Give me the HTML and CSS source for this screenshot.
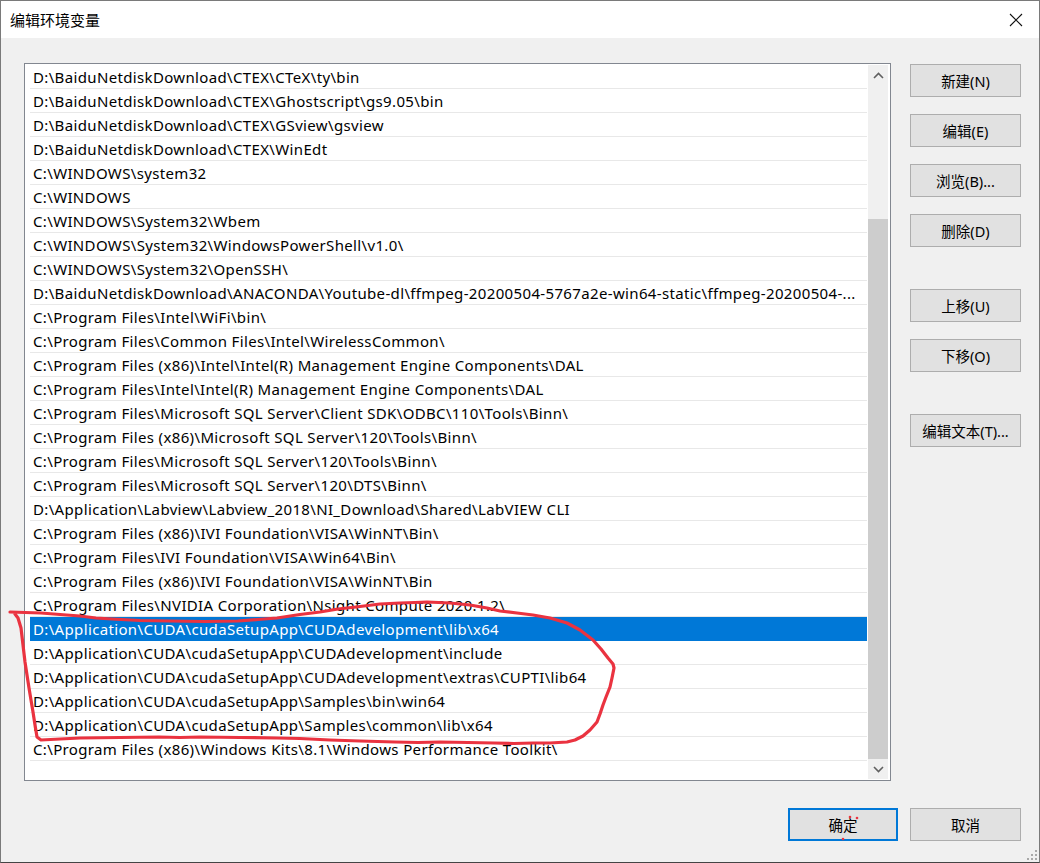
FILE: index.html
```html
<!DOCTYPE html>
<html lang="zh-CN">
<head>
<meta charset="utf-8">
<title>编辑环境变量</title>
<link rel="stylesheet" href="styles.css">
</head>
<body>
<div class="window">
  <div class="titlebar">
    <span class="title">编辑环境变量</span>
    <svg class="close" width="14" height="14" viewBox="0 0 14 14"><path d="M1 1 L13 13 M13 1 L1 13" stroke="#111" stroke-width="1.1" fill="none"/></svg>
  </div>
  <div class="body">
    <div class="main">
      <div class="listbox">
        <div class="rows">
          <div class="row">D:\BaiduNetdiskDownload\CTEX\CTeX\ty\bin</div>
          <div class="row">D:\BaiduNetdiskDownload\CTEX\Ghostscript\gs9.05\bin</div>
          <div class="row">D:\BaiduNetdiskDownload\CTEX\GSview\gsview</div>
          <div class="row">D:\BaiduNetdiskDownload\CTEX\WinEdt</div>
          <div class="row">C:\WINDOWS\system32</div>
          <div class="row">C:\WINDOWS</div>
          <div class="row">C:\WINDOWS\System32\Wbem</div>
          <div class="row">C:\WINDOWS\System32\WindowsPowerShell\v1.0\</div>
          <div class="row">C:\WINDOWS\System32\OpenSSH\</div>
          <div class="row">D:\BaiduNetdiskDownload\ANACONDA\Youtube-dl\ffmpeg-20200504-5767a2e-win64-static\ffmpeg-20200504-...</div>
          <div class="row">C:\Program Files\Intel\WiFi\bin\</div>
          <div class="row">C:\Program Files\Common Files\Intel\WirelessCommon\</div>
          <div class="row">C:\Program Files (x86)\Intel\Intel(R) Management Engine Components\DAL</div>
          <div class="row">C:\Program Files\Intel\Intel(R) Management Engine Components\DAL</div>
          <div class="row">C:\Program Files\Microsoft SQL Server\Client SDK\ODBC\110\Tools\Binn\</div>
          <div class="row">C:\Program Files (x86)\Microsoft SQL Server\120\Tools\Binn\</div>
          <div class="row">C:\Program Files\Microsoft SQL Server\120\Tools\Binn\</div>
          <div class="row">C:\Program Files\Microsoft SQL Server\120\DTS\Binn\</div>
          <div class="row">D:\Application\Labview\Labview_2018\NI_Download\Shared\LabVIEW CLI</div>
          <div class="row">C:\Program Files (x86)\IVI Foundation\VISA\WinNT\Bin\</div>
          <div class="row">C:\Program Files\IVI Foundation\VISA\Win64\Bin\</div>
          <div class="row">C:\Program Files (x86)\IVI Foundation\VISA\WinNT\Bin</div>
          <div class="row">C:\Program Files\NVIDIA Corporation\Nsight Compute 2020.1.2\</div>
          <div class="row selected">D:\Application\CUDA\cudaSetupApp\CUDAdevelopment\lib\x64</div>
          <div class="row">D:\Application\CUDA\cudaSetupApp\CUDAdevelopment\include</div>
          <div class="row">D:\Application\CUDA\cudaSetupApp\CUDAdevelopment\extras\CUPTI\lib64</div>
          <div class="row">D:\Application\CUDA\cudaSetupApp\Samples\bin\win64</div>
          <div class="row">D:\Application\CUDA\cudaSetupApp\Samples\common\lib\x64</div>
          <div class="row">C:\Program Files (x86)\Windows Kits\8.1\Windows Performance Toolkit\</div>
        </div>
        <div class="scrollbar">
          <div class="arrow">
            <svg width="11" height="7" viewBox="0 0 11 7"><path d="M1 6 L5.5 1.5 L10 6" stroke="#606060" stroke-width="1.6" fill="none"/></svg>
          </div>
          <div class="track"><div class="thumb"></div></div>
          <div class="arrow">
            <svg width="11" height="7" viewBox="0 0 11 7"><path d="M1 1 L5.5 5.5 L10 1" stroke="#606060" stroke-width="1.6" fill="none"/></svg>
          </div>
        </div>
      </div>
      <div class="side">
        <div class="group">
          <button class="btn">新建(N)</button>
          <button class="btn">编辑(E)</button>
          <button class="btn">浏览(B)...</button>
          <button class="btn">删除(D)</button>
        </div>
        <div class="group">
          <button class="btn">上移(U)</button>
          <button class="btn">下移(O)</button>
        </div>
        <div class="group">
          <button class="btn">编辑文本(T)...</button>
        </div>
      </div>
    </div>
    <div class="footer">
      <button class="btn default">确定</button>
      <button class="btn">取消</button>
    </div>
  </div>
  <svg class="grip" width="14" height="12" viewBox="0 0 14 12">
    <rect x="11" y="0" width="2" height="2" fill="#a8a8a8"/>
    <rect x="7" y="4" width="2" height="2" fill="#a8a8a8"/>
    <rect x="11" y="4" width="2" height="2" fill="#a8a8a8"/>
    <rect x="3" y="8" width="2" height="2" fill="#a8a8a8"/>
    <rect x="7" y="8" width="2" height="2" fill="#a8a8a8"/>
    <rect x="11" y="8" width="2" height="2" fill="#a8a8a8"/>
  </svg>
  <svg class="annotation" width="1040" height="863" viewBox="0 0 1040 863">
    <path d="M10,612 L25,612.5 L41,613 L60,614.5 L80,616 L96,618 L112,619 L140,620.5 L170,621 L205,621.5 L238,621 L258,619.5 L277,618 L300,614.5 L320,612 L338,609 L356,607 L380,604 L400,603 L415,602.5 L427,602 L450,603 L470,605 L487,608 L500,611 L517,613 L533,615 L550,618 L567,623 L580,630 L593,640 L601,649 L608,658 L613,664 L614,668 L612,678 L610,687 L606,697 L603,705 L600,714 L597,722 L590,730 L583,736 L575,740 L567,742 L550,743 L533,743 L514,743.5 L494,743 L468,742.5 L440,742 L418,742.5 L395,742 L360,741 L330,740 L300,738.5 L277,738 L240,737.5 L200,737 L180,737.5 L159,737 L120,737.5 L80,738 L60,739 L41,740 L37,737 L35,725 L33,712 L31,700 L29,688 L27,675 L25,662 L23,645 L21,628 L18,618 L15,614" stroke="#ea3340" stroke-width="3.2" fill="none" stroke-linejoin="round" stroke-linecap="round"/>
    <circle cx="850" cy="817" r="1.3" fill="#ea3340"/>
    <circle cx="857" cy="818" r="1.3" fill="#ea3340"/>
    <circle cx="843" cy="839" r="1.3" fill="#ea3340"/>
  </svg>
</div>
</body>
</html>
```
FILE: styles.css
```css
* { box-sizing: border-box; }
html, body { margin: 0; padding: 0; background: #f0f0f0; }
body { font-family: "Noto Sans", "Noto Sans CJK SC", sans-serif; }

.window {
  position: relative;
  width: 1040px;
  height: 863px;
  border: 1px solid #7a7a7a;
  border-bottom-color: #444;
  background: #f0f0f0;
  display: flex;
  flex-direction: column;
  overflow: hidden;
}

.titlebar {
  height: 37px;
  background: #ffffff;
  display: flex;
  align-items: center;
  justify-content: space-between;
  padding: 0 16px 0 9px;
  flex: none;
}
.title {
  font-family: "Noto Sans CJK SC", sans-serif;
  font-size: 15px;
  color: #000;
}
.close { display: block; }

.body {
  flex: 1;
  display: flex;
  flex-direction: column;
  padding: 25px 18px 0 23px;
}

.main {
  display: flex;
  gap: 19px;
}

.listbox {
  width: 867px;
  height: 718px;
  border: 1px solid #828790;
  background: #ffffff;
  display: flex;
  padding: 1px 1px 1px 5px;
}

.rows {
  flex: 1;
  min-width: 0;
  display: flex;
  flex-direction: column;
}

.row {
  height: 24px;
  line-height: 24px;
  border-bottom: 1px solid #e8e8e8;
  padding-left: 3px;
  font-size: 15px;
  letter-spacing: 0.35px;
  color: #000;
  white-space: nowrap;
  overflow: hidden;
  text-overflow: ellipsis;
}
.row.selected {
  background: #0078d7;
  color: #ffffff;
  border-bottom-color: #0078d7;
}

.scrollbar {
  width: 20px;
  margin-left: 1px;
  margin-right: 1px;
  background: #f0f0f0;
  display: flex;
  flex-direction: column;
}
.arrow {
  height: 20px;
  display: flex;
  align-items: center;
  justify-content: center;
  flex: none;
}
.track {
  flex: 1;
  display: flex;
  flex-direction: column;
  padding-top: 134px;
}
.thumb {
  flex: 1;
  background: #cdcdcd;
}

.side {
  display: flex;
  flex-direction: column;
  gap: 42px;
  padding-top: 1px;
}
.group {
  display: flex;
  flex-direction: column;
  gap: 17px;
}

.btn {
  width: 111px;
  height: 33px;
  border: 1px solid #adadad;
  background: #e1e1e1;
  font-family: "Noto Sans", "Noto Sans CJK SC", sans-serif;
  font-size: 14.5px;
  color: #000;
  padding: 0;
  margin: 0;
}
.btn.default {
  width: 110px;
  border: 2px solid #0078d7;
}

.footer {
  display: flex;
  justify-content: flex-end;
  gap: 12px;
  margin-top: 27px;
}

.grip {
  position: absolute;
  right: 1px;
  bottom: 0;
}

.annotation {
  position: absolute;
  left: -1px;
  top: -1px;
  pointer-events: none;
}
```
